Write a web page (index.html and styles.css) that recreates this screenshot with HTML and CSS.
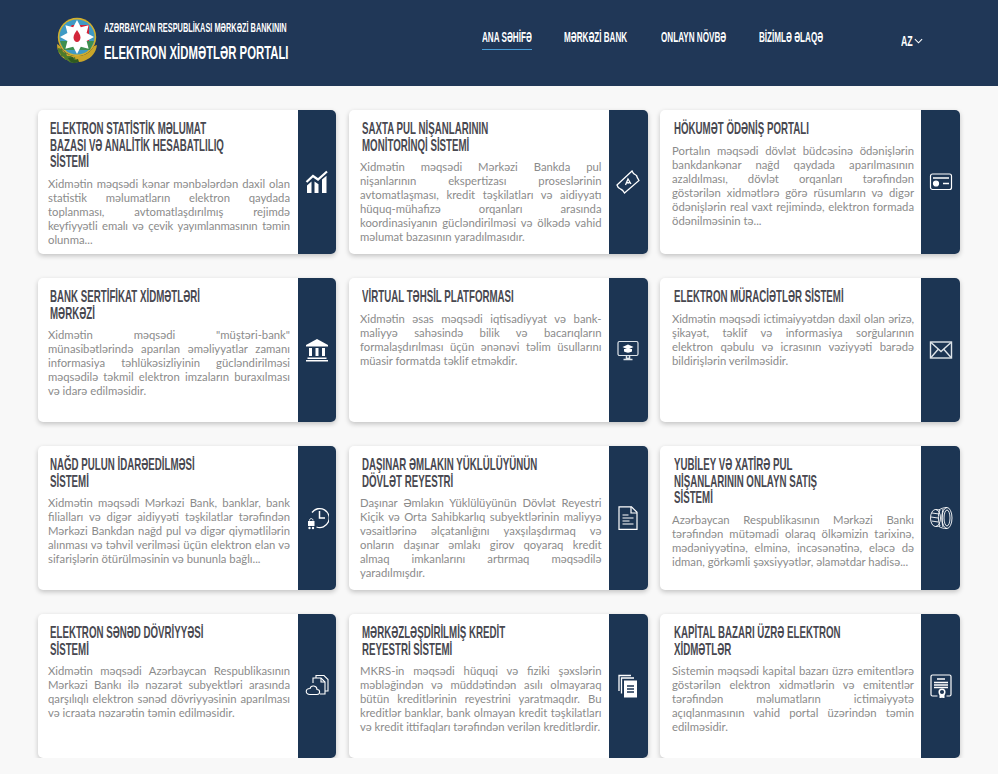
FILE: index.html
```html
<!DOCTYPE html>
<html lang="az">
<head>
    <meta charset="UTF-8">
    <meta name="viewport" content="width=device-width, initial-scale=1.0">
    <title>Elektron Xidmətlər Portalı</title>
    <link rel="stylesheet" href="styles.css">
</head>
<body>
    <header class="top">
        <a class="brand" href="#">
            <svg class="emblem" viewBox="0 0 40 46">
                <path d="M0 27c0 9 5 14 10 16 4 3 14 3 19 0 5-2 10-7 11-15l-3 1c-4 7-10 10-17 10S6 36 3 29z" fill="#c9a52a"/>
                <path d="M1 31l4 1 1 3 3 1 1 3 4 0 2 2 2-1 1 5-3 1-4-1-1-2-3 0-1-3-3-1-1-3-2-1z" fill="#4d7a2c"/>
                <path d="M11 41l5-1 1 3 4-1 1 3-5 1-3-1z" fill="#2f5a20"/>
                <circle cx="20" cy="20" r="19.200" fill="#d4b02c"/>
                <circle cx="20" cy="20" r="17.600" fill="#3f9ac4"/>
                <path d="M20 20 8 8h24v24H8z" fill="#d3263a"/>
                <path d="M3 20A17 17 0 0 1 20 3l-6 6-4 11z" fill="#3f9ac4"/>
                <path d="M3 24h34l-4 9H7z" fill="#3f8f4f"/>
                <path d="M20 3l3.800 7.200 7.800-2-2 7.800L37 20l-7.400 4 2 7.800-7.800-2L20 37l-3.800-7.200-7.800 2 2-7.800L3 20l7.400-4-2-7.800 7.800 2z" fill="#fff"/>
                <path d="M20 13c1 2 3.500 4 3.500 7.500 0 2.500-1.700 4.500-3.500 4.500s-3.500-2-3.500-4.500c0-3.500 2.500-5.500 3.500-7.500z" fill="#d3263a"/>
            </svg>
            <span class="brand-text">
                <span class="brand-sub"><span>AZƏRBAYCAN RESPUBLİKASI MƏRKƏZİ BANKININ</span></span>
                <span class="brand-name"><span>ELEKTRON XİDMƏTLƏR PORTALI</span></span>
            </span>
        </a>
        <nav class="menu">
            <a class="active" href="#"><span>ANA SƏHİFƏ</span></a>
            <a href="#"><span>MƏRKƏZİ BANK</span></a>
            <a href="#"><span>ONLAYN NÖVBƏ</span></a>
            <a href="#"><span>BİZİMLƏ ƏLAQƏ</span></a>
        </nav>
        <a class="lang" href="#"><span>AZ</span>
            <svg viewBox="0 0 10 6"><path d="M1 1l4 4 4-4" fill="none" stroke="#fff" stroke-width="1.200"/></svg>
        </a>
    </header>

    <main class="cards">
        <section class="card">
            <div class="card-body">
                <h3>ELEKTRON STATİSTİK MƏLUMAT<br>BAZASI VƏ ANALİTİK HESABATLILIQ<br>SİSTEMİ</h3>
                <p><span class="ln">Xidmətin məqsədi kənar mənbələrdən daxil olan</span> <span class="ln">statistik məlumatların elektron qaydada</span> <span class="ln">toplanması, avtomatlaşdırılmış rejimdə</span> <span class="ln tight">keyfiyyətli emalı və çevik yayımlanmasının təmin</span> olunma...</p>
            </div>
            <div class="card-side">
                <svg viewBox="0 0 24 24" fill="#fff"><path d="M1.500 12 8 6l5 3.500L22 1.500" fill="none" stroke="#fff" stroke-width="2.200"/><path d="M2 15.500l4.500-4V23H2zM9.500 11.500l4 2.800V23h-4zM17 9.500l4.500-3.800V23H17z"/></svg>
            </div>
        </section>

        <section class="card">
            <div class="card-body">
                <h3>SAXTA PUL NİŞANLARININ<br>MONİTORİNQİ SİSTEMİ</h3>
                <p>Xidmətin məqsədi Mərkəzi Bankda pul nişanlarının ekspertizası proseslərinin avtomatlaşması, kredit təşkilatları və aidiyyatı hüquq-mühafizə orqanları arasında koordinasiyanın gücləndirilməsi və ölkədə vahid məlumat bazasının yaradılmasıdır.</p>
            </div>
            <div class="card-side">
                <svg viewBox="0 0 24 24" fill="none" stroke="#fff" stroke-width="1.300"><path d="M1 15 16 1c1 3 3 4 4.500 4.500.5 2 1.500 3.500 2.500 5L8.500 23c-1-2-2-3.500-4-4-1.500-.5-3-2-3.500-4z"/><path d="M9.500 15l2.500-6 3 5M10.500 12.500l3 .5"/></svg>
            </div>
        </section>

        <section class="card">
            <div class="card-body">
                <h3>HÖKUMƏT ÖDƏNİŞ PORTALI</h3>
                <p>Portalın məqsədi dövlət büdcəsinə ödənişlərin bankdankənar nağd qaydada aparılmasının azaldılması, dövlət orqanları tərəfindən göstərilən xidmətlərə görə rüsumların və digər ödənişlərin real vaxt rejimində, elektron formada ödənilməsinin tə...</p>
            </div>
            <div class="card-side">
                <svg viewBox="0 0 24 24" fill="none" stroke="#fff" stroke-width="1.200"><rect x="1.500" y="4" width="21" height="15.500" rx="2"/><path d="M4 8h16M14 13.500h6" stroke-width="1.500"/><circle cx="7" cy="13.500" r="2.500" fill="#fff"/></svg>
            </div>
        </section>

        <section class="card">
            <div class="card-body">
                <h3>BANK SERTİFİKAT XİDMƏTLƏRİ<br>MƏRKƏZİ</h3>
                <p>Xidmətin məqsədi "müştəri-bank" münasibətlərində aparılan əməliyyatlar zamanı informasiya təhlükəsizliyinin gücləndirilməsi məqsədilə təkmil elektron imzaların buraxılması və idarə edilməsidir.</p>
            </div>
            <div class="card-side">
                <svg viewBox="0 0 24 24" fill="#fff"><path d="M12 1 23 7v1.500H1V7z"/><path d="M4 10h3v8H4zM10.500 10h3v8h-3zM17 10h3v8h-3zM2.500 19.500h19V21h-19zM1 22h22v1.500H1z"/></svg>
            </div>
        </section>

        <section class="card">
            <div class="card-body">
                <h3>VİRTUAL TƏHSİL PLATFORMASI</h3>
                <p>Xidmətin əsas məqsədi iqtisadiyyat və bank-maliyyə sahəsində bilik və bacarıqların formalaşdırılması üçün ənənəvi təlim üsullarını müasir formatda təklif etməkdir.</p>
            </div>
            <div class="card-side">
                <svg viewBox="0 0 24 24" fill="none" stroke="#dfe5ea" stroke-width="1.200"><rect x="2" y="3.500" width="20" height="14" rx="1.500"/><path d="M12 6.500l5.500 2.500-5.500 2.500L6.500 9z" fill="#fff" stroke="none"/><path d="M8 11v2.500c2.500 1.500 5.500 1.500 8 0V11" fill="#fff" stroke="none"/><path d="M10.500 18v2.500h3V18M7.500 21.500h9" stroke-width="1.500"/></svg>
            </div>
        </section>

        <section class="card">
            <div class="card-body">
                <h3>ELEKTRON MÜRACİƏTLƏR SİSTEMİ</h3>
                <p><span class="ln tight">Xidmətin məqsədi ictimaiyyətdən daxil olan ərizə,</span> <span class="ln">şikayət, təklif və informasiya sorğularının</span> <span class="ln">elektron qəbulu və icrasının vəziyyəti barədə</span> bildirişlərin verilməsidir.</p>
            </div>
            <div class="card-side">
                <svg viewBox="0 0 24 24" fill="none" stroke="#dfe5ea" stroke-width="1.400"><rect x="1.500" y="4" width="21" height="16"/><path d="M2 4.500l10 9 10-9M2 19.500l7-8M22 19.500l-7-8"/></svg>
            </div>
        </section>

        <section class="card">
            <div class="card-body">
                <h3>NAĞD PULUN İDARƏEDİLMƏSİ<br>SİSTEMİ</h3>
                <p>Xidmətin məqsədi Mərkəzi Bank, banklar, bank filialları və digər aidiyyəti təşkilatlar tərəfindən Mərkəzi Bankdan nağd pul və digər qiymətlilərin alınması və təhvil verilməsi üçün elektron elan və sifarişlərin ötürülməsinin və bununla bağlı...</p>
            </div>
            <div class="card-side">
                <svg viewBox="0 0 24 24" fill="none" stroke="#fff" stroke-width="1.300"><path d="M7 6.500A9.500 9.500 0 1 1 11.500 21"/><path d="M14.500 5v7H20" stroke-width="1.500"/><path d="M3 15h6.500v5H3z" fill="#fff" stroke="none"/><circle cx="4.500" cy="22" r="1.200" fill="#fff" stroke="none"/><circle cx="8" cy="22" r="1.200" fill="#fff" stroke="none"/><path d="M4.500 14.500c0-2.500 3.500-2.500 3.500 0" stroke-width="1"/></svg>
            </div>
        </section>

        <section class="card">
            <div class="card-body">
                <h3>DAŞINAR ƏMLAKIN YÜKLÜLÜYÜNÜN<br>DÖVLƏT REYESTRİ</h3>
                <p><span class="ln">Daşınar Əmlakın Yüklülüyünün Dövlət Reyestri</span> <span class="ln">Kiçik və Orta Sahibkarlıq subyektlərinin maliyyə</span> <span class="ln">vəsaitlərinə əlçatanlığını yaxşılaşdırmaq və</span> <span class="ln">onların daşınar əmlakı girov qoyaraq kredit</span> <span class="ln">almaq imkanlarını artırmaq məqsədilə</span> yaradılmışdır.</p>
            </div>
            <div class="card-side">
                <svg viewBox="0 0 24 24" fill="none" stroke="#fff" stroke-width="1.200"><path d="M3 .8h12.500l5.500 5.500v17H3z"/><path d="M15 .8V7h6M6.500 9h6M6.500 12h11M6.500 15h7M6.500 18h11"/></svg>
            </div>
        </section>

        <section class="card">
            <div class="card-body">
                <h3>YUBİLEY VƏ XATİRƏ PUL<br>NİŞANLARININ ONLAYN SATIŞ<br>SİSTEMİ</h3>
                <p>Azərbaycan Respublikasının Mərkəzi Bankı tərəfindən mütəmadi olaraq ölkəmizin tarixinə, mədəniyyətinə, elminə, incəsənətinə, eləcə də idman, görkəmli şəxsiyyətlər, əlamətdar hadisə...</p>
            </div>
            <div class="card-side">
                <svg viewBox="0 0 24 24" fill="none" stroke="#fff" stroke-width=".9"><ellipse cx="18" cy="12" rx="5" ry="10.500"/><ellipse cx="18" cy="12" rx="3" ry="8"/><path d="M18 1.500c-3 0-6 1-8 2.500M18 22.500c-3 0-6-.5-8-2"/><ellipse cx="6.500" cy="12" rx="5" ry="8.500"/><path d="M6.500 3.500 11 4M6.500 20.500l4.500-.5M3 7l7 1M2 11l7 1M2.500 15l7 1M11 4c-1 2-2 6-1.500 9M11 20c-.5-2-1.500-4-1.500-7M14 3c-1 3-1.500 14 0 18"/></svg>
            </div>
        </section>

        <section class="card">
            <div class="card-body">
                <h3>ELEKTRON SƏNƏD DÖVRİYYƏSİ<br>SİSTEMİ</h3>
                <p>Xidmətin məqsədi Azərbaycan Respublikasının Mərkəzi Bankı ilə nəzarət subyektləri arasında qarşılıqlı elektron sənəd dövriyyəsinin aparılması və icraata nəzarətin təmin edilməsidir.</p>
            </div>
            <div class="card-side">
                <svg viewBox="0 0 24 24" fill="none" stroke="#fff" stroke-width="1.100"><path d="M8 9V4h8l4 4v12h-5"/><path d="M11 4V1.500h8l4 4V17h-3"/><path d="M16 4v4h4"/><path d="M5 20.500c-5 0-5-6 0-6 1-4 7-3 7 1 3.500 0 3.500 5 0 5z"/></svg>
            </div>
        </section>

        <section class="card">
            <div class="card-body">
                <h3>MƏRKƏZLƏŞDİRİLMİŞ KREDİT<br>REYESTRİ SİSTEMİ</h3>
                <p>MKRS-in məqsədi hüquqi və fiziki şəxslərin məbləğindən və müddətindən asılı olmayaraq bütün kreditlərinin reyestrini yaratmaqdır. Bu kreditlər banklar, bank olmayan kredit təşkilatları və kredit ittifaqları tərəfindən verilən kreditlərdir.</p>
            </div>
            <div class="card-side">
                <svg viewBox="0 0 24 24" fill="none" stroke="#fff" stroke-width="1.300"><path d="M3 17V1.500h12M5.500 19.500V4H18"/><path d="M8 6.500h13v17H8z" fill="#fff" stroke="none"/><path d="M11 12h7M11 15h7M11 18h7" stroke="#1c3553"/></svg>
            </div>
        </section>

        <section class="card">
            <div class="card-body">
                <h3>KAPİTAL BAZARI ÜZRƏ ELEKTRON<br>XİDMƏTLƏR</h3>
                <p>Sistemin məqsədi kapital bazarı üzrə emitentlərə göstərilən elektron xidmətlərin və emitentlər tərəfindən məlumatların ictimaiyyətə açıqlanmasının vahid portal üzərindən təmin edilməsidir.</p>
            </div>
            <div class="card-side">
                <svg viewBox="0 0 24 24" fill="none" stroke="#fff" stroke-width="1.200"><path d="M8.500 22H3.500a1.500 1.500 0 0 1-1.500-1.500v-18A1.500 1.500 0 0 1 3.500 1h17A1.500 1.500 0 0 1 22 2.500v18a1.500 1.500 0 0 1-1.500 1.500h-3"/><path d="M8 5h8" stroke-width="1.600"/><path d="M5 8.500h14M5 11h14M5 13.500h14" stroke-width="1.600"/><circle cx="13" cy="18" r="2.800" stroke-width="1.500"/><path d="M11 20v4l2-1 2 1v-4" fill="#fff" stroke-width="1"/></svg>
            </div>
        </section>
    </main>
</body>
</html>
```

FILE: styles.css
```css
* {
    box-sizing: border-box;
}
body {
    margin: 0;
    background-color: #f8f8f8;
    font-family: Lato, sans-serif;
}
a {
    text-decoration: none;
    color: #fff;
}

/* header */
.top {
    height: 86px;
    background-color: #203757;
    display: flex;
    padding-left: 57px;
    font-family: "Liberation Sans", sans-serif;
    font-weight: bold;
    color: #fff;
}

/* no condensed font installed, so these get squeezed */
.brand-sub span,
.brand-name span,
.menu span,
.lang span,
.card-body h3 {
    display: block;
    white-space: nowrap;
    transform-origin: left center;
    transform: scaleX(0.58);
}
.brand {
    display: flex;
    align-items: flex-start;
    gap: 7px;
    width: 425px;
    padding-top: 17px;
}
.emblem {
    width: 40px;
    height: 46px;
}
.brand-text {
    display: flex;
    flex-direction: column;
    width: 184px;
    padding-top: 4px;
}
.brand-sub {
    font-size: 12px;
    line-height: 15px;
}
.brand-sub span {
    transform: scaleX(0.615);
}
.brand-name {
    font-size: 19px;
    line-height: 20px;
    margin-top: 7px;
}
.brand-name span {
    transform: scaleX(0.597);
}
.menu {
    display: grid;
    grid-template-columns: 82px 97px 98px 60px;
    width: 419px;
    padding-top: 29px;
    font-size: 14px;
}
.menu a {
    height: 21px;
    line-height: 16px;
}
.menu a.active {
    width: 50px;
    border-bottom: 1px solid #4a9fd8;
}
.lang {
    display: flex;
    align-items: center;
    height: 16px;
    margin-top: 33px;
    font-size: 14px;
}
.lang span {
    width: 13px;
    transform: scaleX(0.63);
}
.lang svg {
    width: 9px;
    height: 6px;
}

/* cards */
.cards {
    display: grid;
    grid-template-columns: 298px 299px 300px;
    grid-auto-rows: 144px;
    gap: 24px 12.500px;
    padding: 24px 0 0 38px;
}
.card {
    display: flex;
    background: #fff;
    border-radius: 5px;
    overflow: hidden;
    box-shadow: 0 2px 5px rgba(0, 0, 0, 0.22);
}
.card-body {
    flex: 1;
    min-width: 0;
    padding: 10px 8px 0 10px;
}
.card:nth-child(3n+2) .card-body {
    padding: 10px 7px 0 11.500px;
}
.card:nth-child(3n) .card-body {
    padding: 10px 7px 0 12px;
}
.card-body h3 {
    margin: 0 0 7px 2px;
    font-family: "Liberation Sans", sans-serif;
    font-size: 16.400px;
    line-height: 16.500px;
    font-weight: bold;
    color: #484850;
    transform: scaleX(0.593);
}
.card-body p {
    margin: 0;
    font-size: 11.300px;
    line-height: 14px;
    color: #8b8b8b;
    text-align: justify;
}
/* lines that have to break where the original breaks */
.ln {
    display: block;
    text-align-last: justify;
}
.tight {
    letter-spacing: -0.1px;
}
.card-side {
    width: 39px;
    flex-shrink: 0;
    background-color: #1c3553;
    display: flex;
    align-items: center;
    justify-content: center;
}
.card:nth-child(3n+1) .card-side {
    width: 38px;
}
.card-side svg {
    width: 24px;
    height: 24px;
}
```
